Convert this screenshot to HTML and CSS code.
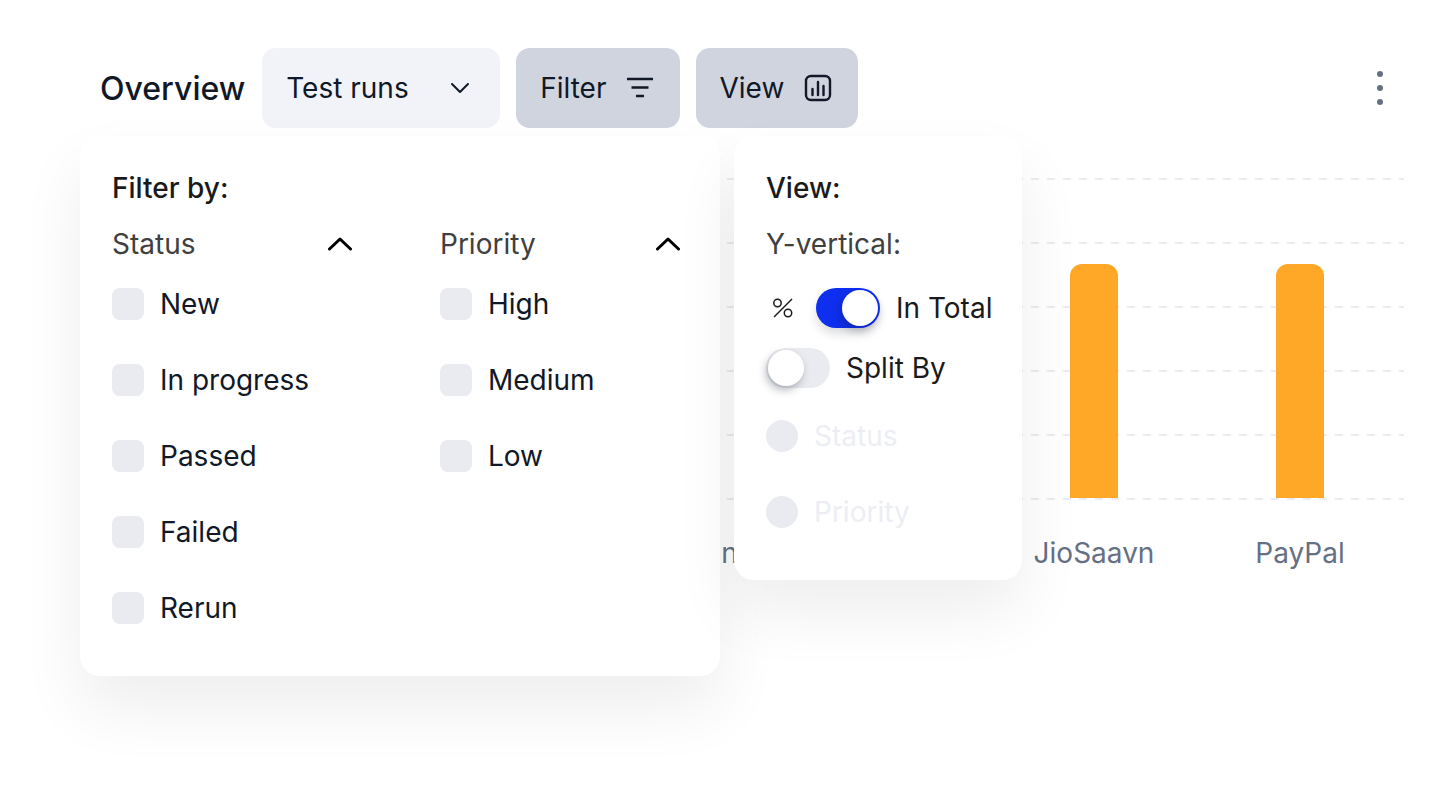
FILE: index.html
```html
<!DOCTYPE html>
<html>
<head>
  <meta charset="UTF-8" />
  <title>Overview</title>
  <link rel="stylesheet" href="styles.css">
</head>
<body>
  <div class="page">

    <div class="toolbar">
      <h1 class="title">Overview</h1>
      <button class="btn btn-light btn-select">Test runs
        <svg width="24" height="24" viewBox="0 0 24 24" fill="none" stroke="#111827" stroke-width="2" stroke-linecap="round" stroke-linejoin="round"><path d="M4 8l8 8 8-8"/></svg>
      </button>
      <button class="btn btn-grey">Filter
        <svg width="28" height="24" viewBox="0 0 28 24" fill="none" stroke="#111827" stroke-width="2.400"><path d="M1 3h26M5.500 11.500h17M10 20h8"/></svg>
      </button>
      <button class="btn btn-grey btn-view">View
        <svg width="28" height="28" viewBox="0 0 28 28" fill="none" stroke="#111827" stroke-width="2.400" stroke-linecap="round"><rect x="2" y="2" width="24" height="24" rx="5"/><path d="M8.500 15v6M14 8v13M19.500 12v9"/></svg>
      </button>
      <div class="kebab"><span></span><span></span><span></span></div>
    </div>

    <div class="chart">
      <div class="plot">
        <div class="lines">
          <div class="line"></div>
          <div class="line"></div>
          <div class="line"></div>
          <div class="line"></div>
          <div class="line"></div>
          <div class="line"></div>
        </div>
        <div class="bars">
          <div class="col"><div class="bar"></div></div>
          <div class="col"><div class="bar"></div></div>
          <div class="col"><div class="bar"></div></div>
          <div class="col"><div class="bar"></div></div>
        </div>
      </div>
      <div class="labels">
        <div class="label">LinkedIn</div>
        <div class="label">Spotify</div>
        <div class="label">JioSaavn</div>
        <div class="label">PayPal</div>
      </div>
    </div>

    <div class="menu menu-filter">
      <div class="menu-title">Filter by:</div>
      <div class="filter-cols">
        <div class="filter-col">
          <div class="col-head">Status
            <svg width="24" height="14" viewBox="0 0 24 14" fill="none" stroke="#000" stroke-width="3" stroke-linecap="round" stroke-linejoin="round"><path d="M1.500 12L12 2l10.500 10"/></svg>
          </div>
          <div class="check-row"><span class="box"></span>New</div>
          <div class="check-row"><span class="box"></span>In progress</div>
          <div class="check-row"><span class="box"></span>Passed</div>
          <div class="check-row"><span class="box"></span>Failed</div>
          <div class="check-row"><span class="box"></span>Rerun</div>
        </div>
        <div class="filter-col">
          <div class="col-head">Priority
            <svg width="24" height="14" viewBox="0 0 24 14" fill="none" stroke="#000" stroke-width="3" stroke-linecap="round" stroke-linejoin="round"><path d="M1.500 12L12 2l10.500 10"/></svg>
          </div>
          <div class="check-row"><span class="box"></span>High</div>
          <div class="check-row"><span class="box"></span>Medium</div>
          <div class="check-row"><span class="box"></span>Low</div>
        </div>
      </div>
    </div>

    <div class="menu menu-view">
      <div class="menu-title">View:</div>
      <div class="col-head">Y-vertical:</div>
      <div class="toggle-row toggle-row-on">
        <svg class="percent" width="24" height="24" viewBox="0 0 24 24" fill="none" stroke="#1a1a1a" stroke-width="1.500"><circle cx="6.500" cy="7" r="3.700"/><circle cx="17" cy="17" r="3.700"/><path d="M21 3L3 21"/></svg>
        <span class="toggle on"><span class="knob"></span></span>
        In Total
      </div>
      <div class="toggle-row">
        <span class="toggle"><span class="knob"></span></span>
        Split By
      </div>
      <div class="radio-row"><span class="radio"></span>Status</div>
      <div class="radio-row"><span class="radio"></span>Priority</div>
    </div>

  </div>
</body>
</html>
```

FILE: styles.css
```css
* {
  box-sizing: border-box;
}
body {
  margin: 0;
  background-color: #fff;
  font-family: Inter, "Liberation Sans", sans-serif;
  overflow: hidden;
}
.page {
  position: relative;
  width: 1452px;
  height: 788px;
  padding: 48px 48px 0 100px;
}

/* toolbar */
.toolbar {
  display: flex;
  align-items: center;
  height: 80px;
}
.title {
  margin: 0 17px 0 0;
  font-size: 32px;
  font-weight: 500;
  color: #111827;
}
.btn {
  display: flex;
  align-items: center;
  height: 80px;
  margin-right: 16px;
  padding: 0 26px 0 24px;
  border: 0;
  border-radius: 14px;
  font-family: inherit;
  font-size: 28px;
  color: #111827;
}
.btn svg {
  margin-left: 19px;
}
.btn-view svg {
  margin-left: 20px;
}
.btn-light {
  background-color: #f1f3f8;
}
.btn-select {
  width: 238px;
  justify-content: space-between;
  padding-right: 28px;
}
.btn-grey {
  background-color: #d0d4de;
}
.kebab {
  display: flex;
  flex-direction: column;
  gap: 8px;
  margin-left: auto;
  margin-right: 21px;
}
.kebab span {
  width: 6px;
  height: 6px;
  border-radius: 50%;
  background-color: #667085;
}

/* chart behind the menus */
.chart {
  margin-top: 50px;
  margin-left: 479px;
}
.plot {
  display: grid;
}
.lines, .bars {
  grid-area: 1 / 1;
}
.line {
  height: 64px;
  background-image: repeating-linear-gradient(90deg, transparent 0 4px, #ebebf2 4px 12px, transparent 12px 16px);
  background-size: 100% 2px;
  background-repeat: no-repeat;
}
.line:last-child {
  height: 2px;
}
.bars {
  display: flex;
  align-items: flex-end;
}
.col {
  width: 206px;
  display: flex;
  justify-content: center;
}
.bar {
  width: 48px;
  height: 234px;
  margin-bottom: 2px;
  border-radius: 12px 12px 0 0;
  background-color: #ffa726;
}
.labels {
  display: flex;
  margin-top: 36px;
}
.label {
  width: 206px;
  text-align: center;
  font-size: 28px;
  color: #667085;
}

/* menus */
.menu {
  position: absolute;
  top: 136px;
  border-radius: 20px;
  background-color: #fff;
  box-shadow: 0 32px 64px rgba(0, 0, 0, 0.07);
}
.menu-filter {
  left: 80px;
  width: 640px;
  height: 540px;
  padding: 36px 40px 0 32px;
}
.menu-view {
  left: 734px;
  width: 288px;
  height: 444px;
  padding: 36px 0 0 32px;
}
.menu-title {
  font-size: 28px;
  font-weight: 500;
  line-height: 32px;
  color: #1a1a1a;
}
.filter-cols {
  display: flex;
  gap: 88px;
}
.filter-col {
  width: 240px;
}
.col-head {
  display: flex;
  align-items: center;
  justify-content: space-between;
  height: 32px;
  margin-top: 24px;
  font-size: 28px;
  color: #404040;
}
.check-row {
  display: flex;
  align-items: center;
  height: 32px;
  margin-top: 44px;
  font-size: 28px;
  color: #111827;
}
.col-head + .check-row {
  margin-top: 28px;
}
.box {
  width: 32px;
  height: 32px;
  margin-right: 16px;
  border-radius: 8px;
  background-color: #e9ebf0;
}

/* view menu */
.toggle-row {
  display: flex;
  align-items: center;
  height: 40px;
  margin-top: 20px;
  font-size: 28px;
  color: #1a1a1a;
}
.toggle-row-on {
  margin-top: 28px;
}
.percent {
  margin-left: 5px;
  margin-right: 21px;
}
.toggle {
  display: block;
  width: 64px;
  height: 40px;
  margin-right: 16px;
  padding: 2px;
  border-radius: 20px;
  background-color: #e9ebf0;
}
.toggle.on {
  background-color: #0f2ff0;
  box-shadow: 0 6px 10px rgba(17, 24, 39, 0.15);
}
.knob {
  display: block;
  width: 36px;
  height: 36px;
  border-radius: 50%;
  background-color: #fff;
  box-shadow: -2px 4px 8px rgba(17, 24, 39, 0.3);
}
.toggle.on .knob {
  margin-left: 24px;
}
.radio-row {
  display: flex;
  align-items: center;
  height: 32px;
  margin-top: 32px;
  font-size: 28px;
  color: #eceef3;
}
.radio-row + .radio-row {
  margin-top: 44px;
}
.radio {
  width: 32px;
  height: 32px;
  margin-right: 16px;
  border-radius: 50%;
  background-color: #e9ebf0;
}
```
